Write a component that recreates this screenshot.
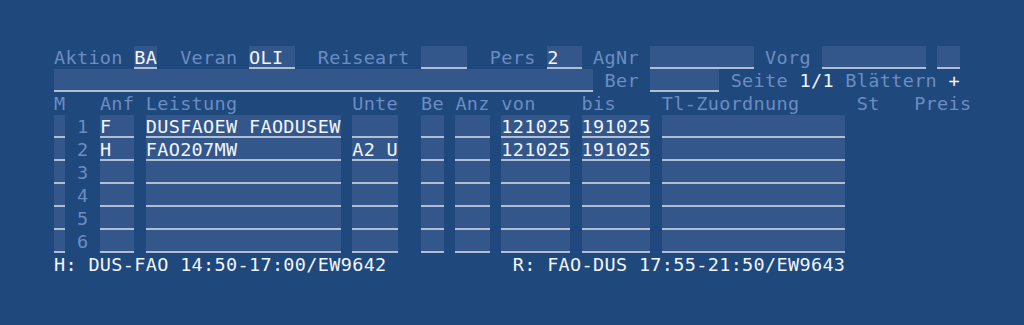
import React from "react";

const LBL = "text-[#6b8dc2]";
const VAL = "text-[#f2f5fa]";
const FIELD = "bg-[#34578b] border-b-2 border-[#b0bdd3] text-[#f2f5fa] whitespace-pre overflow-visible h-[23px]";
const ROW = "grid grid-cols-[repeat(80,11.47px)] grid-rows-[23px] h-[23px] leading-[23px] whitespace-pre";

type Cell = { cls: string; text?: string; field?: boolean; value?: boolean };

function Line({ cells }: { cells: Cell[] }) {
  return (
    <div className={ROW}>
      {cells.map((c, i) => (
        <div key={i} className={`${c.cls} ${c.field ? FIELD : c.value ? VAL : LBL}`}>
          {c.text ?? ""}
        </div>
      ))}
    </div>
  );
}

const line0: Cell[] = [
  { cls: "col-start-1 col-span-6", text: "Aktion" },
  { cls: "col-start-8 col-span-2", text: "BA", field: true },
  { cls: "col-start-12 col-span-5", text: "Veran" },
  { cls: "col-start-18 col-span-4", text: "OLI", field: true },
  { cls: "col-start-24 col-span-8", text: "Reiseart" },
  { cls: "col-start-33 col-span-4", field: true },
  { cls: "col-start-39 col-span-4", text: "Pers" },
  { cls: "col-start-44 col-span-3", text: "2", field: true },
  { cls: "col-start-48 col-span-4", text: "AgNr" },
  { cls: "col-start-53 col-span-9", field: true },
  { cls: "col-start-63 col-span-4", text: "Vorg" },
  { cls: "col-start-68 col-span-9", field: true },
  { cls: "col-start-78 col-span-2", field: true },
];

const line1: Cell[] = [
  { cls: "col-start-1 col-span-47", field: true },
  { cls: "col-start-49 col-span-3", text: "Ber" },
  { cls: "col-start-53 col-span-6", field: true },
  { cls: "col-start-60 col-span-5", text: "Seite" },
  { cls: "col-start-66 col-span-3", text: "1/1", value: true },
  { cls: "col-start-70 col-span-8", text: "Blättern" },
  { cls: "col-start-79 col-span-1", text: "+", value: true },
];

const header: Cell[] = [
  { cls: "col-start-1 col-span-1", text: "M" },
  { cls: "col-start-5 col-span-3", text: "Anf" },
  { cls: "col-start-9 col-span-8", text: "Leistung" },
  { cls: "col-start-27 col-span-4", text: "Unte" },
  { cls: "col-start-33 col-span-2", text: "Be" },
  { cls: "col-start-36 col-span-3", text: "Anz" },
  { cls: "col-start-40 col-span-3", text: "von" },
  { cls: "col-start-47 col-span-3", text: "bis" },
  { cls: "col-start-54 col-span-12", text: "Tl-Zuordnung" },
  { cls: "col-start-71 col-span-2", text: "St" },
  { cls: "col-start-76 col-span-5", text: "Preis" },
];

const rows = [
  { n: "1", anf: "F", leist: "DUSFAOEW FAODUSEW", unte: "", von: "121025", bis: "191025" },
  { n: "2", anf: "H", leist: "FAO207MW", unte: "A2 U", von: "121025", bis: "191025" },
  { n: "3", anf: "", leist: "", unte: "", von: "", bis: "" },
  { n: "4", anf: "", leist: "", unte: "", von: "", bis: "" },
  { n: "5", anf: "", leist: "", unte: "", von: "", bis: "" },
  { n: "6", anf: "", leist: "", unte: "", von: "", bis: "" },
];

function dataRow(r: (typeof rows)[number]): Cell[] {
  return [
    { cls: "col-start-1 col-span-1", field: true },
    { cls: "col-start-3 col-span-1", text: r.n },
    { cls: "col-start-5 col-span-3", text: r.anf, field: true },
    { cls: "col-start-9 col-span-17", text: r.leist, field: true },
    { cls: "col-start-27 col-span-4", text: r.unte, field: true },
    { cls: "col-start-33 col-span-2", field: true },
    { cls: "col-start-36 col-span-3", field: true },
    { cls: "col-start-40 col-span-6", text: r.von, field: true },
    { cls: "col-start-47 col-span-6", text: r.bis, field: true },
    { cls: "col-start-54 col-span-16", field: true },
  ];
}

const footer: Cell[] = [
  { cls: "col-start-1 col-span-29", text: "H: DUS-FAO 14:50-17:00/EW9642", value: true },
  { cls: "col-start-41 col-span-29", text: "R: FAO-DUS 17:55-21:50/EW9643", value: true },
];

export default function App() {
  return (
    <div className="w-[1024px] h-[325px] bg-[#1f487c] pt-[46px] pl-[54px] font-['DejaVu_Sans_Mono',monospace] text-[18.5px] tracking-[0.33px] overflow-hidden">
      <Line cells={line0} />
      <Line cells={line1} />
      <Line cells={header} />
      {rows.map((r) => (
        <Line key={r.n} cells={dataRow(r)} />
      ))}
      <Line cells={footer} />
    </div>
  );
}
